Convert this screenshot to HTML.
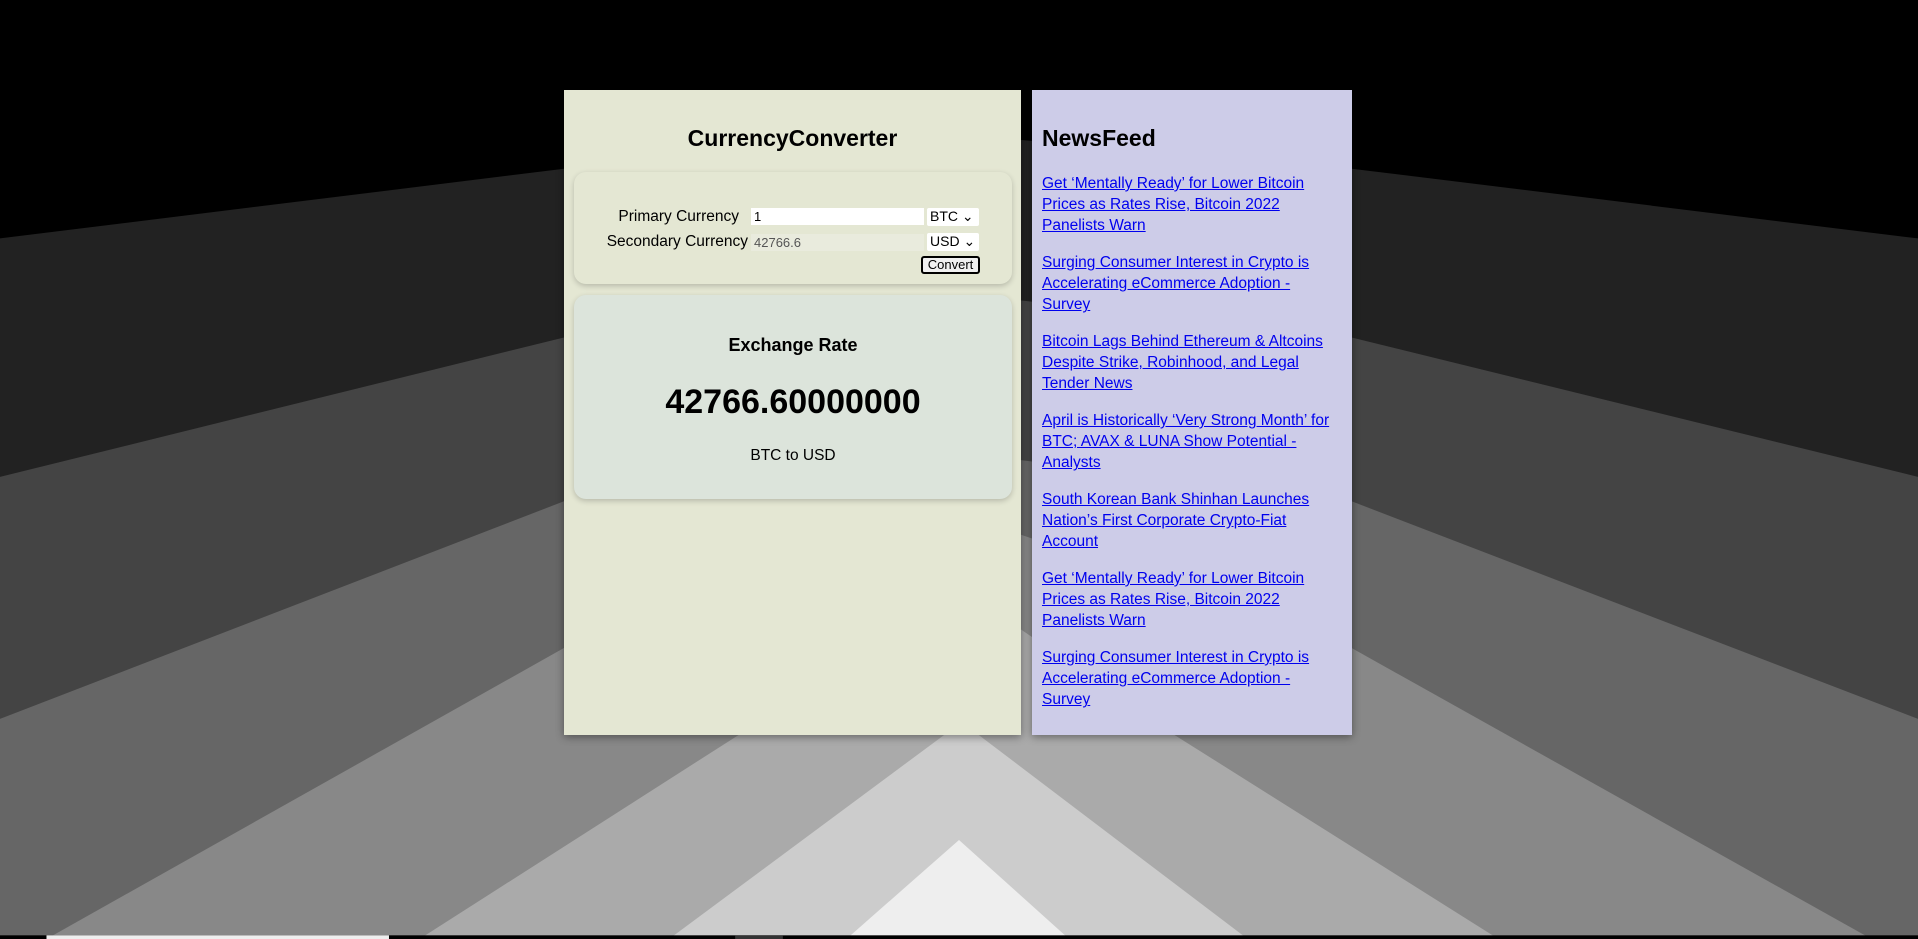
<!DOCTYPE html>
<html><head><meta charset="utf-8"><style>
html,body{margin:0;padding:0;width:1918px;height:939px;overflow:hidden;background:#000;font-family:"Liberation Sans",sans-serif;}
svg.bg{position:absolute;left:0;top:0;width:1918px;height:939px}
.panel{position:absolute;top:90px;height:645px;box-shadow:0 2px 8px rgba(0,0,0,.4)}
#left{left:564px;width:457px;background:#e4e7d3}
#right{left:1032px;width:320px;background:#cdcce8}
h1{position:absolute;margin:0;font-size:23px;font-weight:bold;color:#000}
.card{position:absolute;left:10px;width:438px;border-radius:12px;box-shadow:0 2px 6px rgba(0,0,0,.2)}
.lbl{position:absolute;font-size:15.5px;color:#000;text-align:right}
.inp{position:absolute;height:17px;font-size:13px;line-height:17px;padding-left:3px;box-sizing:border-box}
.sel{position:absolute;background:#fff;font-size:14px;line-height:17px;height:18px;padding-left:3px;box-sizing:border-box;border-radius:2px}
a{color:#0000ee;text-decoration:underline;font-size:15.5px;line-height:21.2px;display:block;position:absolute;left:10px;width:288px}
</style></head><body>
<svg class="bg" viewBox="0 0 1568 768" preserveAspectRatio="none">
<rect width="1568" height="768" fill="#000"/>
<polygon fill="#222" points="0,195 461,138 784,110 1105,138 1568,195 1568,768 0,768"/>
<polygon fill="#444" points="0,390 461,276 784,240 1105,276 1568,390 1568,768 0,768"/>
<polygon fill="#666" points="0,588 461,410 784,370 1105,410 1568,588 1568,768 0,768"/>
<polygon fill="#888" points="38,768 461,530 784,420 1105,530 1530,768"/>
<polygon fill="#aaa" points="343,768 604,601 784,480 960,601 1225,768"/>
<polygon fill="#ccc" points="547,768 772,601 784,590 800,601 1020,768"/>
<polygon fill="#eee" points="692,768 784,687 874,768"/>
<rect y="765" width="1568" height="3" fill="#000"/>
<rect x="38" y="765" width="280" height="3" fill="#eee"/>
<rect x="601" y="765" width="39" height="3" fill="#333"/>
</svg>
<div class="panel" id="left">
<h1 style="left:0;width:457px;text-align:center;top:35px">CurrencyConverter</h1>
<div class="card" style="top:82px;height:112px;background:#e4e7d3">
 <div class="lbl" style="left:0;width:165px;top:36px">Primary Currency</div>
 <div class="inp" style="left:177px;top:36px;width:173px;background:#fff">1</div>
 <div class="sel" style="left:353px;top:36px;width:52px">BTC ⌄</div>
 <div class="lbl" style="left:0;width:174px;top:61px">Secondary Currency</div>
 <div class="inp" style="left:177px;top:62px;width:173px;background:#e9ebdd;color:#555">42766.6</div>
 <div class="sel" style="left:353px;top:61px;width:52px">USD ⌄</div>
 <div style="position:absolute;left:347px;top:84px;width:59px;height:18px;border:2px solid #000;border-radius:3px;box-sizing:border-box;background:#f0f0f0;font-size:13px;line-height:14px;text-align:center">Convert</div>
</div>
<div class="card" style="top:205px;height:204px;background:#dce4db">
 <div style="position:absolute;width:100%;text-align:center;top:40px;font-size:18px;font-weight:bold">Exchange Rate</div>
 <div style="position:absolute;width:100%;text-align:center;top:88px;font-size:34px;font-weight:bold">42766.60000000</div>
 <div style="position:absolute;width:100%;text-align:center;top:152px;font-size:15.5px">BTC to USD</div>
</div>
</div>
<div class="panel" id="right">
<h1 style="left:10px;top:35px">NewsFeed</h1>
<a style="top:83px">Get ‘Mentally Ready’ for Lower Bitcoin Prices as Rates Rise, Bitcoin 2022 Panelists Warn</a>
<a style="top:162px">Surging Consumer Interest in Crypto is Accelerating eCommerce Adoption - Survey</a>
<a style="top:241px">Bitcoin Lags Behind Ethereum &amp; Altcoins Despite Strike, Robinhood, and Legal Tender News</a>
<a style="top:320px">April is Historically ‘Very Strong Month’ for BTC; AVAX &amp; LUNA Show Potential - Analysts</a>
<a style="top:399px">South Korean Bank Shinhan Launches Nation’s First Corporate Crypto-Fiat Account</a>
<a style="top:478px">Get ‘Mentally Ready’ for Lower Bitcoin Prices as Rates Rise, Bitcoin 2022 Panelists Warn</a>
<a style="top:557px">Surging Consumer Interest in Crypto is Accelerating eCommerce Adoption - Survey</a>
</div>
</body></html>
